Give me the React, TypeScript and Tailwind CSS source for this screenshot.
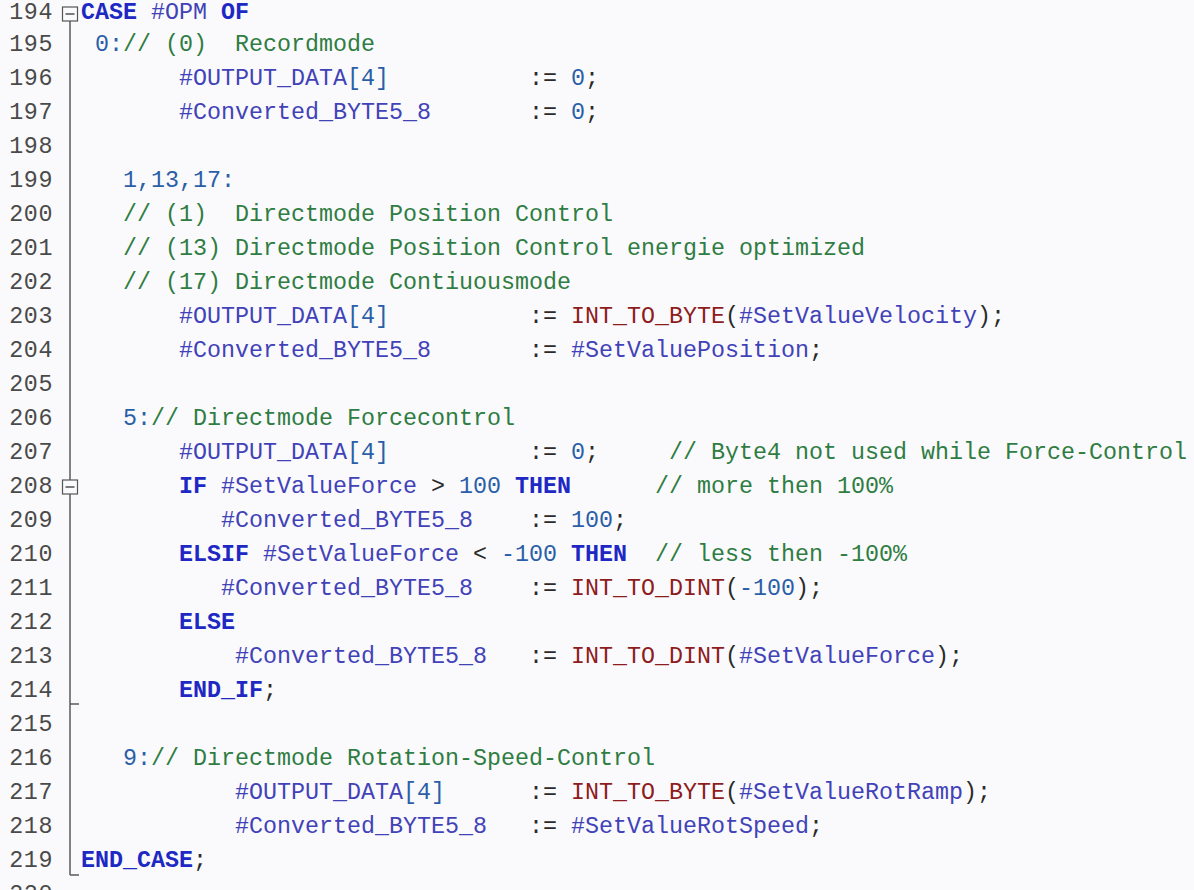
import React from "react";

type Seg = [string, string];

const K = "text-[#2028c4] font-bold";
const V = "text-[#4242b8]";
const C = "text-[#2f7d42]";
const N = "text-[#2a5fa8]";
const F = "text-[#8e1c1c]";
const O = "text-[#2a2a2a]";

const sp = (n: number): Seg => [" ".repeat(n), O];

const lines: { num: number; segs: Seg[] }[] = [
  { num: 194, segs: [["CASE", K], sp(1), ["#OPM", V], sp(1), ["OF", K]] },
  { num: 195, segs: [sp(1), ["0:", N], ["// (0)  Recordmode", C]] },
  { num: 196, segs: [sp(7), ["#OUTPUT_DATA", V], ["[4]", N], sp(10), [":= ", O], ["0", N], [";", O]] },
  { num: 197, segs: [sp(7), ["#Converted_BYTE5_8", V], sp(7), [":= ", O], ["0", N], [";", O]] },
  { num: 198, segs: [] },
  { num: 199, segs: [sp(3), ["1,13,17:", N]] },
  { num: 200, segs: [sp(3), ["// (1)  Directmode Position Control", C]] },
  { num: 201, segs: [sp(3), ["// (13) Directmode Position Control energie optimized", C]] },
  { num: 202, segs: [sp(3), ["// (17) Directmode Contiuousmode", C]] },
  {
    num: 203,
    segs: [sp(7), ["#OUTPUT_DATA", V], ["[4]", N], sp(10), [":= ", O], ["INT_TO_BYTE", F], ["(", O], ["#SetValueVelocity", V], [");", O]],
  },
  { num: 204, segs: [sp(7), ["#Converted_BYTE5_8", V], sp(7), [":= ", O], ["#SetValuePosition", V], [";", O]] },
  { num: 205, segs: [] },
  { num: 206, segs: [sp(3), ["5:", N], ["// Directmode Forcecontrol", C]] },
  {
    num: 207,
    segs: [sp(7), ["#OUTPUT_DATA", V], ["[4]", N], sp(10), [":= ", O], ["0", N], [";", O], sp(5), ["// Byte4 not used while Force-Control", C]],
  },
  {
    num: 208,
    segs: [sp(7), ["IF", K], sp(1), ["#SetValueForce", V], [" > ", O], ["100", N], sp(1), ["THEN", K], sp(6), ["// more then 100%", C]],
  },
  { num: 209, segs: [sp(10), ["#Converted_BYTE5_8", V], sp(4), [":= ", O], ["100", N], [";", O]] },
  {
    num: 210,
    segs: [sp(7), ["ELSIF", K], sp(1), ["#SetValueForce", V], [" < ", O], ["-100", N], sp(1), ["THEN", K], sp(2), ["// less then -100%", C]],
  },
  {
    num: 211,
    segs: [sp(10), ["#Converted_BYTE5_8", V], sp(4), [":= ", O], ["INT_TO_DINT", F], ["(", O], ["-100", N], [");", O]],
  },
  { num: 212, segs: [sp(7), ["ELSE", K]] },
  {
    num: 213,
    segs: [sp(11), ["#Converted_BYTE5_8", V], sp(3), [":= ", O], ["INT_TO_DINT", F], ["(", O], ["#SetValueForce", V], [");", O]],
  },
  { num: 214, segs: [sp(7), ["END_IF", K], [";", O]] },
  { num: 215, segs: [] },
  { num: 216, segs: [sp(3), ["9:", N], ["// Directmode Rotation-Speed-Control", C]] },
  {
    num: 217,
    segs: [sp(11), ["#OUTPUT_DATA", V], ["[4]", N], sp(6), [":= ", O], ["INT_TO_BYTE", F], ["(", O], ["#SetValueRotRamp", V], [");", O]],
  },
  { num: 218, segs: [sp(11), ["#Converted_BYTE5_8", V], sp(3), [":= ", O], ["#SetValueRotSpeed", V], [";", O]] },
  { num: 219, segs: [["END_CASE", K], [";", O]] },
  { num: 220, segs: [] },
];

const LINE = "#5a5a5a";

function Gutter({ num, h }: { num: number; h: number }) {
  const x = 17;
  const box = (cy: number) => (
    <g>
      <rect x={9.5} y={cy - 7} width={15} height={14} fill="#fafafc" stroke="#555" strokeWidth={1.2} />
      <line x1={12.5} x2={21.5} y1={cy} y2={cy} stroke="#444" strokeWidth={1.4} />
    </g>
  );
  let content: React.ReactNode = null;
  if (num === 194) {
    content = (
      <>
        <line x1={x} x2={x} y1={21} y2={h} stroke={LINE} strokeWidth={1.5} />
        {box(14)}
      </>
    );
  } else if (num === 219) {
    content = (
      <>
        <line x1={x} x2={x} y1={0} y2={31} stroke={LINE} strokeWidth={1.5} />
        <line x1={x} x2={26} y1={31} y2={31} stroke={LINE} strokeWidth={1.5} />
      </>
    );
  } else if (num < 220) {
    content = (
      <>
        <line x1={x} x2={x} y1={0} y2={h} stroke={LINE} strokeWidth={1.5} />
        {num === 214 && <line x1={x} x2={26} y1={30} y2={30} stroke={LINE} strokeWidth={1.5} />}
        {num === 208 && box(h / 2)}
      </>
    );
  }
  return (
    <svg width={28} height={h} className="shrink-0 block">
      {content}
    </svg>
  );
}

export default function App() {
  return (
    <div
      className="w-[1194px] h-[890px] overflow-hidden bg-[#fafafc]"
      style={{ fontFamily: '"Liberation Mono", "DejaVu Sans Mono", monospace' }}
    >
      <div className="flex flex-col text-[23.33px]">
        {lines.map((l) => {
          const first = l.num === 194;
          const h = first ? 28 : 34;
          return (
            <div
              key={l.num}
              className={first ? "flex h-[28px] items-start leading-[26px]" : "flex h-[34px] items-start leading-[34px]"}
            >
              <div className="w-[53px] shrink-0 text-right text-[#4a4a4a] tracking-[0.6px]">{l.num}</div>
              <Gutter num={l.num} h={h} />
              <div className="whitespace-pre">
                {l.segs.map((s, i) => (
                  <span key={i} className={s[1]}>
                    {s[0]}
                  </span>
                ))}
              </div>
            </div>
          );
        })}
      </div>
    </div>
  );
}
